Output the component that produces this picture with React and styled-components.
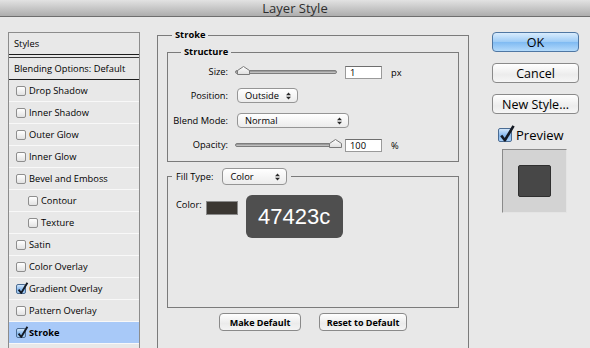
import React from "react"
import styled, { createGlobalStyle } from "styled-components"

const GlobalStyle = createGlobalStyle`
  html, body {
    margin: 0;
    padding: 0;
    background: #e8e8e8;
  }
  body {
    font-family: "Open Sans", "DejaVu Sans", sans-serif;
    font-size: 9.3px;
    font-weight: 500;
    color: #000;
  }
`

const Window = styled.div`
  width: 590px;
  height: 348px;
  overflow: hidden;
  background: #e8e8e8;
  display: flex;
  flex-direction: column;
`
const TitleBar = styled.div`
  flex: none;
  height: 16px;
  line-height: 16px;
  text-align: center;
  font-size: 13px;
  font-weight: 400;
  color: #2e2e2e;
  background: linear-gradient(#e2e2e2, #adadad);
  border-bottom: 1px solid #6e6e6e;
`
const Body = styled.div`
  flex: 1;
  display: flex;
  align-items: flex-start;
  padding-top: 15px;
`

/* left list */
const StyleList = styled.div`
  margin-left: 8px;
  width: 132px;
  box-sizing: border-box;
  align-self: stretch;
  border: 1px solid #8c8c8c;
  border-bottom: none;
`
const ListHeader = styled.div`
  height: 21px;
  display: flex;
  align-items: center;
  padding-left: 5px;
  border-bottom: 1px solid #1c1c1c;
  margin-top: ${p => (p.$gap ? "2px" : "0")};
  border-top: ${p => (p.$gap ? "1px solid #3a3a3a" : "none")};
`
const StyleRow = styled.div`
  height: 21px;
  display: flex;
  align-items: center;
  gap: 3px;
  padding-left: ${p => (p.$indent ? 19 : 7)}px;
  border-bottom: 1px solid #f8f8f8;
  background: ${p => (p.$active ? "#a8c9f8" : "transparent")};
  font-weight: ${p => (p.$active ? 700 : 500)};
`

/* checkbox */
const Box = styled.span`
  position: relative;
  flex: none;
  width: ${p => p.$size}px;
  height: ${p => p.$size}px;
  box-sizing: border-box;
  border: 1px solid ${p => (p.$checked ? "#4b6c93" : "#8e8e8e")};
  border-radius: 2px;
  background: ${p =>
    p.$checked
      ? "linear-gradient(#d2e6fa, #86b8ee 55%, #a9d0f7)"
      : "linear-gradient(#ffffff, #e2e2e2)"};
`
const Tick = styled.svg`
  position: absolute;
  left: 0;
  top: 0;
  overflow: visible;
`

const Checkbox = ({ checked, size = 10 }) => (
  <Box $checked={checked} $size={size}>
    {checked && (
      <Tick width={size} height={size} viewBox="0 0 10 10">
        <path
          d="M1.6 4.6 L4.2 8 L10.4 -2.2"
          fill="none"
          stroke="#141a24"
          strokeWidth="1.9"
          strokeLinejoin="round"
        />
      </Tick>
    )}
  </Box>
)

/* group boxes */
const Group = styled.fieldset`
  margin: 0;
  min-width: 0;
  box-sizing: border-box;
  border: 1px solid #7b7b7b;
`
const StrokeGroup = styled(Group)`
  margin: -3px 0 0 17px;
  width: 312px;
  height: 340px;
  padding: 5px 9px 0;
`
const StructureGroup = styled(Group)`
  padding: 8px 0 9px;
  display: grid;
  grid-template-columns: 60px auto;
  column-gap: 7px;
  row-gap: 10px;
  align-items: center;
`
const FillGroup = styled(Group)`
  margin-top: 6px;
  height: 140px;
  padding: 10px 8px 0;
`
const Legend = styled.legend`
  margin-left: ${p => p.$offset}px;
  padding: 0 ${p => p.$pad || 3}px;
  line-height: 12px;
  font-weight: ${p => (p.$plain ? 500 : 700)};
  display: flex;
  align-items: center;
  gap: 9px;
`

const Label = styled.div`
  text-align: right;
  white-space: nowrap;
  line-height: 12px;
`
const Control = styled.div`
  display: flex;
  align-items: center;
  height: ${p => p.$h}px;
`

/* slider */
const Track = styled.div`
  position: relative;
  width: 102px;
  height: 4px;
  box-sizing: border-box;
  border: 1px solid #7d7d7d;
  border-radius: 3px;
  background: linear-gradient(#8c8c8c, #cfcfcf);
`
const Thumb = styled.svg`
  position: absolute;
  top: -5px;
`
const Slider = ({ at }) => (
  <Track>
    <Thumb width="13" height="9" viewBox="0 0 13 9" style={{ left: at }}>
      <defs>
        <linearGradient id="tg" x1="0" y1="0" x2="0" y2="1">
          <stop offset="0" stopColor="#ffffff" />
          <stop offset="1" stopColor="#dedede" />
        </linearGradient>
      </defs>
      <polygon
        points="0.5,8.5 0.5,4.5 6.5,0.5 12.5,4.5 12.5,8.5"
        fill="url(#tg)"
        stroke="#7a7a7a"
      />
    </Thumb>
  </Track>
)

const NumberBox = styled.div`
  margin-left: 8px;
  width: 37px;
  height: 13px;
  box-sizing: border-box;
  border: 1px solid #9a9a9a;
  border-top-color: #6e6e6e;
  background: #fff;
  padding-left: 4px;
  line-height: 11px;
`
const Unit = styled.span`
  margin-left: 9px;
`

/* popup menu */
const Popup = styled.div`
  margin-left: ${p => p.$ml || 0}px;
  width: ${p => p.$w}px;
  height: ${p => p.$h || 15}px;
  box-sizing: border-box;
  display: flex;
  align-items: center;
  justify-content: space-between;
  padding: 0 6px 0 7px;
  border: 1px solid #959595;
  border-radius: 4px;
  background: linear-gradient(#ffffff, #ececec);
  font-weight: 500;
  color: #000;
`
const Arrows = () => (
  <svg width="5" height="8" viewBox="0 0 5 8">
    <path d="M0 3.2 L2.5 0.4 L5 3.2 Z M0 4.8 L2.5 7.6 L5 4.8 Z" fill="#2a2a2a" />
  </svg>
)
const Select = ({ children, ...rest }) => (
  <Popup {...rest}>
    <span>{children}</span>
    <Arrows />
  </Popup>
)

/* fill */
const ColorRow = styled.div`
  display: flex;
  align-items: flex-start;
`
const ColorLabel = styled.span`
  margin-top: 4px;
  line-height: 12px;
`
const Swatch = styled.div`
  margin: 6px 0 0 4px;
  width: 32px;
  height: 14px;
  box-sizing: border-box;
  border: 1px solid #8a8a8a;
  background: #3b3732;
`
const HexTip = styled.div`
  margin-left: 8px;
  width: 97px;
  height: 43px;
  border-radius: 6px;
  background: #4f4f4f;
  color: #fff;
  font-family: "Liberation Sans", Arial, sans-serif;
  font-weight: 400;
  font-size: 22px;
  display: flex;
  align-items: center;
  justify-content: center;
`

const ButtonRow = styled.div`
  display: flex;
  justify-content: center;
  gap: 18px;
  margin-top: 5px;
`
const SmallButton = styled.div`
  width: ${p => p.$w}px;
  height: 18px;
  box-sizing: border-box;
  border: 1px solid #8a8a8a;
  border-radius: 4px;
  background: linear-gradient(#ffffff, #ebebeb 60%, #f4f4f4);
  font-weight: 700;
  font-size: 9px;
  display: flex;
  align-items: center;
  justify-content: center;
`

/* right column */
const Actions = styled.div`
  margin-left: 23px;
  width: 87px;
  display: flex;
  flex-direction: column;
`
const BigButton = styled.div`
  height: 20px;
  margin-top: ${p => (p.$first ? 0 : 11)}px;
  box-sizing: border-box;
  border: 1px solid ${p => (p.$primary ? "#4f77a3" : "#8a8a8a")};
  border-radius: 4px;
  background: ${p =>
    p.$primary
      ? "linear-gradient(#d9ecfd, #9ccbf6 50%, #7fbaf2 51%, #b3dafb)"
      : "linear-gradient(#ffffff, #ececec 60%, #f6f6f6)"};
  font-size: 12.5px;
  display: flex;
  align-items: center;
  justify-content: center;
`
const PreviewRow = styled.label`
  margin: 13px 0 0 6px;
  display: flex;
  align-items: center;
  gap: 4px;
  font-size: 13px;
  line-height: 16px;
`
const PreviewWell = styled.div`
  margin: 6px 0 0 10px;
  width: 65px;
  height: 64px;
  box-sizing: border-box;
  border: 1px solid #8a8a8a;
  border-right-color: #e4e4e4;
  border-bottom-color: #e4e4e4;
  background: #d3d3d3;
  display: flex;
  align-items: center;
  justify-content: center;
`
const PreviewSquare = styled.div`
  width: 33px;
  height: 32px;
  box-sizing: border-box;
  border: 1px solid #2f2f2f;
  border-radius: 2px;
  background: #474747;
`

const effects = [
  { name: "Drop Shadow" },
  { name: "Inner Shadow" },
  { name: "Outer Glow" },
  { name: "Inner Glow" },
  { name: "Bevel and Emboss" },
  { name: "Contour", indent: true },
  { name: "Texture", indent: true },
  { name: "Satin" },
  { name: "Color Overlay" },
  { name: "Gradient Overlay", checked: true },
  { name: "Pattern Overlay" },
  { name: "Stroke", checked: true, active: true },
]

const App = () => (
  <Window>
    <GlobalStyle />
    <TitleBar>Layer Style</TitleBar>
    <Body>
      <StyleList>
        <ListHeader>Styles</ListHeader>
        <ListHeader $gap>Blending Options: Default</ListHeader>
        {effects.map(e => (
          <StyleRow key={e.name} $indent={e.indent} $active={e.active}>
            <Checkbox checked={e.checked} />
            {e.name}
          </StyleRow>
        ))}
      </StyleList>

      <StrokeGroup>
        <Legend $offset={5}>Stroke</Legend>
        <StructureGroup>
          <Legend $offset={13}>Structure</Legend>
          <Label>Size:</Label>
          <Control $h={12}>
            <Slider at={1} />
            <NumberBox>1</NumberBox>
            <Unit>px</Unit>
          </Control>
          <Label>Position:</Label>
          <Control $h={15}>
            <Select $ml={2} $w={61}>Outside</Select>
          </Control>
          <Label>Blend Mode:</Label>
          <Control $h={15}>
            <Select $ml={2} $w={112}>Normal</Select>
          </Control>
          <Label>Opacity:</Label>
          <Control $h={14}>
            <Slider at={93} />
            <NumberBox>100</NumberBox>
            <Unit>%</Unit>
          </Control>
        </StructureGroup>
        <FillGroup>
          <Legend $offset={-4} $pad={4} $plain>
            Fill Type:
            <Select $w={65} $h={17}>Color</Select>
          </Legend>
          <ColorRow>
            <ColorLabel>Color:</ColorLabel>
            <Swatch />
            <HexTip>47423c</HexTip>
          </ColorRow>
        </FillGroup>
        <ButtonRow>
          <SmallButton $w={82}>Make Default</SmallButton>
          <SmallButton $w={88}>Reset to Default</SmallButton>
        </ButtonRow>
      </StrokeGroup>

      <Actions>
        <BigButton $first $primary>OK</BigButton>
        <BigButton>Cancel</BigButton>
        <BigButton>New Style...</BigButton>
        <PreviewRow>
          <Checkbox checked size={14} />
          Preview
        </PreviewRow>
        <PreviewWell>
          <PreviewSquare />
        </PreviewWell>
      </Actions>
    </Body>
  </Window>
)

export default App
